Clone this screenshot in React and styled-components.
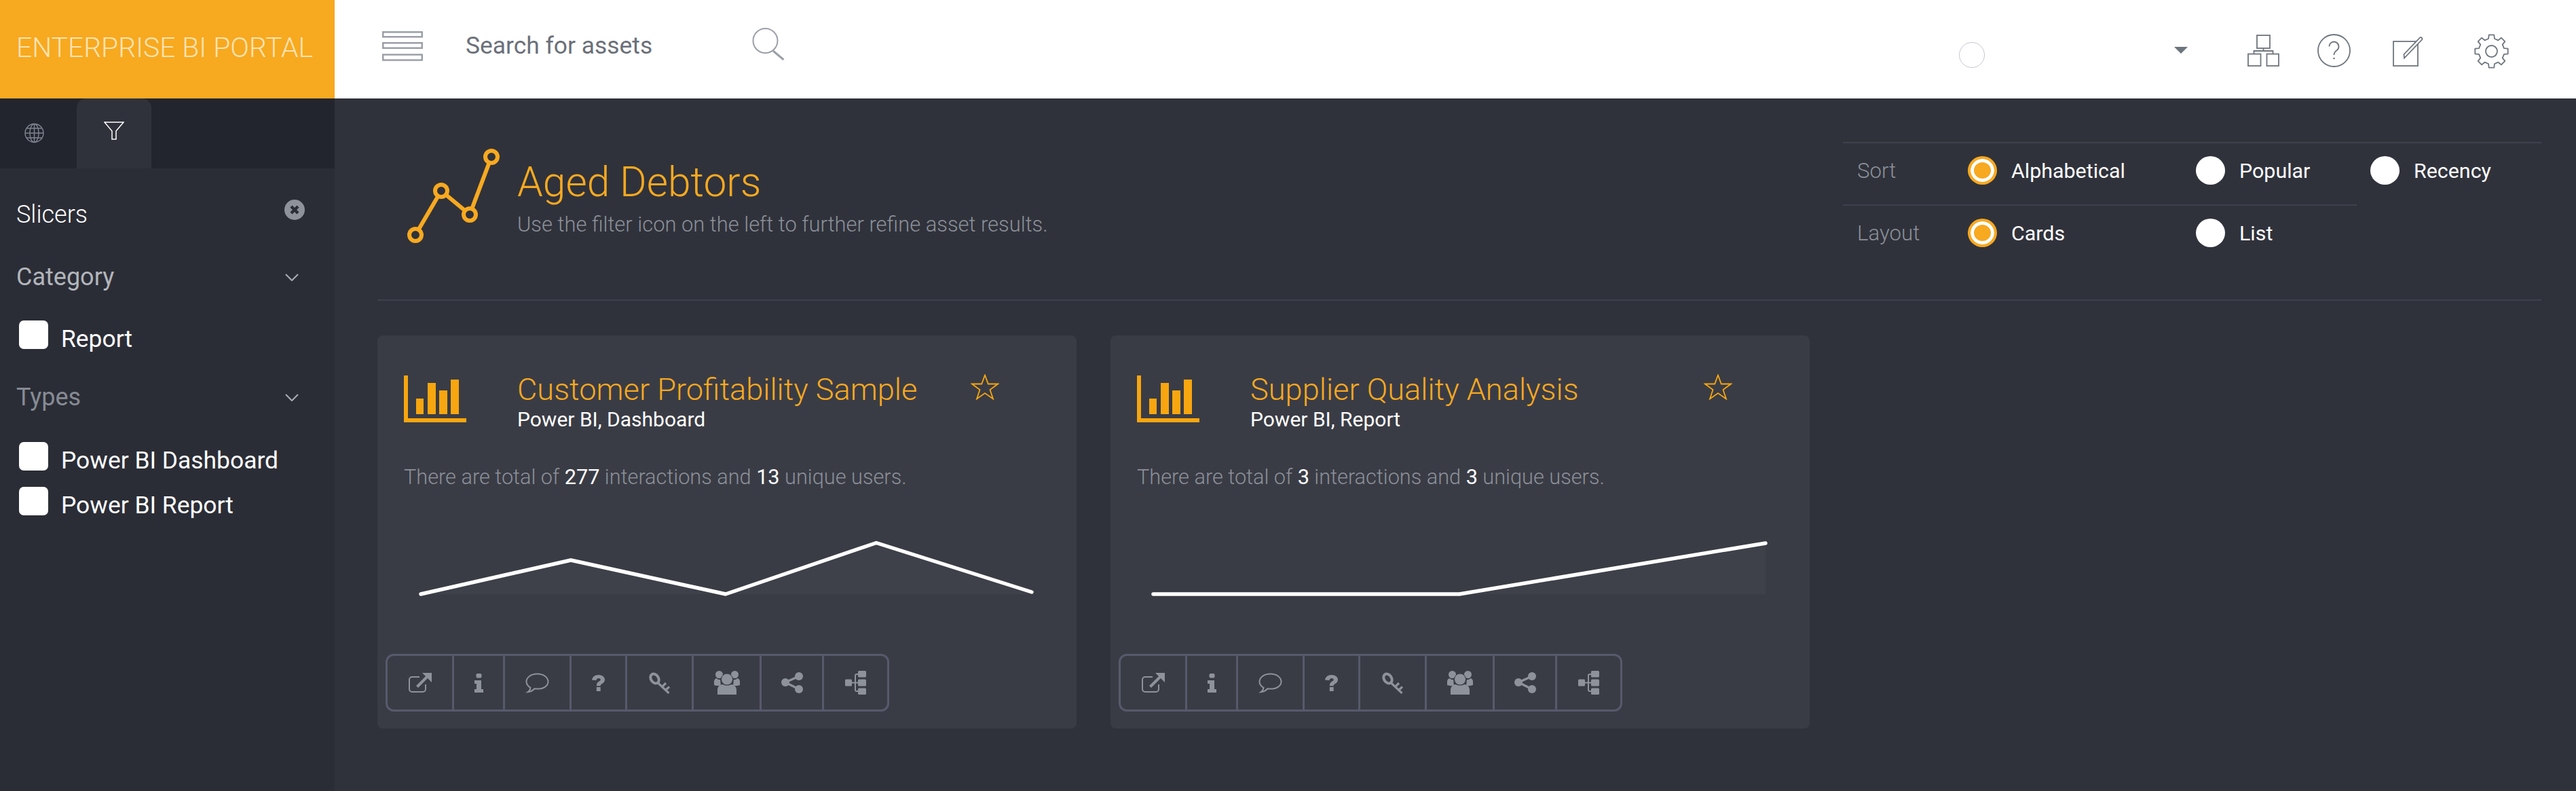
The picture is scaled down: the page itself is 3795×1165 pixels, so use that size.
import React from "react";
import styled, { createGlobalStyle } from "styled-components";

const GlobalStyle = createGlobalStyle`
  html, body {
    margin: 0;
    padding: 0;
    background: #30323b;
    font-family: Roboto, "Liberation Sans", sans-serif;
  }
  * {
    box-sizing: border-box;
  }
`;

const Page = styled.div`
  width: 3795px;
  height: 1165px;
  display: flex;
  flex-direction: column;
  overflow: hidden;
`;

const TopBar = styled.header`
  height: 145px;
  display: flex;
  align-items: flex-start;
  background: #fff;
  flex: none;
`;

const Brand = styled.div`
  width: 493px;
  height: 145px;
  flex: none;
  background: #f7a920;
  color: #fce3b4;
  font-size: 40.8px;
  font-weight: 300;
  line-height: 141px;
  padding-left: 24px;
  white-space: nowrap;
`;

const MenuIcon = styled.svg`
  width: 60px;
  height: 44px;
  margin: 46px 0 0 70px;
  flex: none;
`;

const SearchBox = styled.div`
  width: 422px;
  margin: 46px 0 0 63px;
  flex: none;
  color: #6b7079;
  font-size: 35.4px;
  line-height: 42px;
`;

const SearchIcon = styled.svg`
  width: 48px;
  height: 48px;
  margin-top: 41px;
  flex: none;
`;

const UserArea = styled.div`
  margin-left: auto;
  padding-right: 99px;
  display: flex;
  align-items: flex-start;
`;

const Avatar = styled.div`
  width: 38px;
  height: 38px;
  margin-top: 62px;
  border: 1px solid #c6c6d6;
  border-radius: 50%;
`;

const Caret = styled.div`
  width: 0;
  height: 0;
  margin: 69px 0 0 279px;
  border-left: 10px solid transparent;
  border-right: 10px solid transparent;
  border-top: 10px solid #6c757d;
`;

const TopIcon = styled.svg`
  width: ${(p) => p.$w}px;
  height: ${(p) => p.$h}px;
  margin-left: ${(p) => p.$gap}px;
  margin-top: ${(p) => p.$top}px;
  flex: none;
  fill: none;
  stroke: #6e767e;
  stroke-width: 1.8;
`;

const Body = styled.div`
  flex: 1;
  display: flex;
  min-height: 0;
`;

const Sidebar = styled.aside`
  width: 493px;
  flex: none;
  background: #2b2d36;
  display: flex;
  flex-direction: column;
`;

const TabStrip = styled.div`
  height: 103px;
  display: flex;
  background: #23252e;
`;

const Tab = styled.div`
  width: ${(p) => (p.$active ? 110 : 113)}px;
  height: 103px;
  display: flex;
  justify-content: ${(p) => (p.$active ? "center" : "flex-start")};
  padding-top: ${(p) => (p.$active ? 34 : 36)}px;
  padding-left: ${(p) => (p.$active ? 0 : 36)}px;
  background: ${(p) => (p.$active ? "#30323b" : "transparent")};
  border-radius: 14px 14px 0 0;
`;

const SlicerPanel = styled.div`
  padding: 38px 44px 0 24px;
`;

const SlicerRow = styled.div`
  height: 60px;
  display: flex;
  align-items: center;
  justify-content: space-between;
  margin-top: ${(p) => p.$mt || 0}px;
  color: ${(p) => p.$color};
  font-size: ${(p) => p.$size}px;
  font-weight: ${(p) => p.$weight};
`;

const CloseIcon = styled.svg`
  width: 30px;
  height: 30px;
  margin-top: -15px;
`;

const Chevron = styled.svg`
  width: 20px;
  height: 11px;
  margin-right: 9px;
  fill: none;
  stroke: #a5a9b0;
  stroke-width: 2.2;
`;

const CheckRow = styled.label`
  display: flex;
  align-items: flex-start;
  height: 42px;
  margin-top: ${(p) => p.$mt}px;
  margin-left: 4px;
  color: #fff;
  font-size: 35.4px;
  line-height: 54px;
  white-space: nowrap;
`;

const CheckBox = styled.span`
  width: 43px;
  height: 42px;
  flex: none;
  background: #fff;
  border-radius: 7px;
  margin-right: 19px;
`;

const Main = styled.main`
  flex: 1;
  padding: 0 51px 0 63px;
  background: #30323b;
  min-width: 0;
`;

const PageHead = styled.section`
  height: 298px;
  display: flex;
  justify-content: space-between;
  border-bottom: 2px solid #3e404d;
`;

const HeadLeft = styled.div`
  display: flex;
  padding: 73px 0 0 44px;
`;

const HeadIcon = styled.svg`
  width: 137px;
  height: 141px;
  flex: none;
  fill: none;
  stroke: #f7a920;
  stroke-width: 6;
`;

const HeadText = styled.div`
  margin-left: 25px;
`;

const PageTitle = styled.h1`
  margin: 17px 0 0;
  color: #f7a920;
  font-size: 60.5px;
  font-weight: 300;
  line-height: 68px;
`;

const PageHint = styled.p`
  margin: 8px 0 0;
  color: #8b9099;
  font-size: 30.9px;
  font-weight: 300;
  line-height: 40px;
`;

const OptionsPanel = styled.div`
  width: 1029px;
  margin-top: 64px;
`;

const OptionRow = styled.div`
  width: ${(p) => p.$width}px;
  height: 92px;
  padding-top: 19px;
  border-top: 2px solid #3e404d;
  display: flex;
  align-items: flex-start;
`;

const OptionLabel = styled.div`
  width: 184px;
  padding-left: 21px;
  color: #8b9099;
  font-size: 31.2px;
  font-weight: 300;
  line-height: 44px;
`;

const Option = styled.div`
  width: ${(p) => p.$width}px;
  display: flex;
  align-items: flex-start;
  color: #fff;
  font-size: 30.4px;
  line-height: 44px;
  white-space: nowrap;
`;

const Radio = styled.span`
  width: 43px;
  height: 42px;
  margin-right: 21px;
  flex: none;
  border-radius: 50%;
  background: ${(p) => (p.$on ? "#f7a920" : "#fff")};
  border: ${(p) => (p.$on ? "4px solid #f7a920" : "none")};
  box-shadow: ${(p) => (p.$on ? "inset 0 0 0 5px #fff" : "none")};
`;

const CardList = styled.div`
  display: flex;
  gap: 50px;
  margin-top: 51px;
`;

const Card = styled.article`
  width: 1030px;
  height: 579px;
  background: #3a3c45;
  border-radius: 8px;
  padding-top: 55px;
`;

const CardHead = styled.div`
  display: flex;
  padding-left: 39px;
`;

const CardIcon = styled.svg`
  width: 92px;
  height: 69px;
  margin: 4px 75px 0 0;
  flex: none;
  fill: #f7a60f;
`;

const CardTitles = styled.div`
  width: 668px;
  flex: none;
`;

const CardTitle = styled.h2`
  margin: 0;
  color: #f7a920;
  font-size: 45.2px;
  font-weight: 300;
  line-height: 49px;
  white-space: nowrap;
`;

const CardType = styled.div`
  color: #fff;
  font-size: 30px;
  line-height: 40px;
`;

const Star = styled.svg`
  width: 42px;
  height: 38px;
  margin-top: 2px;
  flex: none;
  fill: none;
  stroke: #f7a60f;
  stroke-width: 1.8;
`;

const Stats = styled.p`
  margin: 45px 0 0;
  padding-left: 39px;
  color: #8b9099;
  font-size: 30.7px;
  font-weight: 300;
  line-height: 40px;

  b {
    color: #fff;
    font-weight: 400;
  }
`;

const Spark = styled.svg`
  display: block;
  width: 1030px;
  height: 160px;
  margin-top: 57px;
`;

const ActionBar = styled.div`
  display: flex;
  width: 742px;
  height: 85px;
  margin: 23px 0 0 12px;
  border: 3px solid #575a6c;
  border-radius: 12px;
`;

const ActionCell = styled.div`
  width: ${(p) => p.$width}px;
  flex: none;
  display: flex;
  align-items: center;
  justify-content: center;
  color: #8d929b;

  & + & {
    border-left: 3px solid #575a6c;
  }
`;

const ActionIcon = styled.svg`
  width: ${(p) => p.$w}px;
  height: ${(p) => p.$h}px;
  display: block;
  fill: currentColor;
`;

function gearPath(cx, cy, teeth, outer, root) {
  const pts = [];
  const step = (Math.PI * 2) / teeth;
  for (let i = 0; i < teeth; i++) {
    const a = i * step - Math.PI / 2;
    const d = step * 0.2;
    const d2 = step * 0.3;
    pts.push([a - d2, root], [a - d, outer], [a + d, outer], [a + d2, root]);
  }
  return (
    pts
      .map(([a, r], i) => `${i ? "L" : "M"}${(cx + Math.cos(a) * r).toFixed(2)} ${(cy + Math.sin(a) * r).toFixed(2)}`)
      .join(" ") + "Z"
  );
}

const actions = [
  {
    width: 95,
    w: 35,
    h: 30,
    shape: (
      <>
        <path d="M17 6H6a4 4 0 0 0-4 4v14a4 4 0 0 0 4 4h16a4 4 0 0 0 4-4v-7" fill="none" stroke="currentColor" strokeWidth="2" />
        <path d="M13.5 20.5 28 6" fill="none" stroke="currentColor" strokeWidth="4" />
        <path d="M21 0h14v14z" />
      </>
    ),
  },
  {
    width: 75,
    w: 13,
    h: 28,
    shape: (
      <>
        <rect x="2.5" y="0" width="8" height="6.5" rx="2" />
        <path d="M0 10h10v13h3v5H0v-5h3v-8H0z" />
      </>
    ),
  },
  {
    width: 98,
    w: 35,
    h: 30,
    shape: (
      <path
        d="M17.5 1.5C8 1.5 1.5 7 1.5 13c0 3.6 2.4 6.8 6 8.8-.4 2.6-1.800 5-4 6.500 3.800-.3 7.400-2.200 10-5 1.300.2 2.600.3 4 .3 9.500 0 16-4.600 16-10.600S27 1.500 17.500 1.500z"
        fill="none"
        stroke="currentColor"
        strokeWidth="2"
      />
    ),
  },
  {
    width: 82,
    w: 19,
    h: 24,
    shape: (
      <>
        <path d="M0 7.500C.6 3 4.300 0 9.700 0 15 0 19 3 19 7c0 3-1.800 4.700-4 6-1.500.9-2.300 1.600-2.300 3.300H6.800c0-3.200 1-4.800 3-6.200 1.500-1 3-1.600 3-3 0-1.200-1.200-2-2.900-2-1.900 0-3.200 1-3.600 3z" />
        <rect x="6.800" y="18" width="5.900" height="6" />
      </>
    ),
  },
  {
    width: 98,
    w: 33,
    h: 32,
    shape: (
      <>
        <ellipse cx="9.500" cy="9.500" rx="5.500" ry="7.500" transform="rotate(-35 9.500 9.500)" fill="none" stroke="currentColor" strokeWidth="4" />
        <path d="M13.500 15 30.500 31M20.500 21.500l5.500-5.500M25.500 26.500l5.500-5" fill="none" stroke="currentColor" strokeWidth="3.200" />
      </>
    ),
  },
  {
    width: 100,
    w: 38,
    h: 35,
    shape: (
      <>
        <circle cx="7.500" cy="5.500" r="5.500" />
        <circle cx="30.500" cy="5.500" r="5.500" />
        <path d="M0 21v-5c0-3 1.500-4.500 4-5 1.500 2 3 2 5 2l1 9H4z" />
        <path d="M38 21v-5c0-3-1.500-4.500-4-5-1.500 2-3 2-5 2l-1 9h6z" />
        <circle cx="19" cy="12.500" r="8.500" stroke="#3a3c45" strokeWidth="1" />
        <path d="M5 35v-7c0-5 4-8 8-8 3 2 9 2 12 0 4 0 8 3 8 8v7z" />
      </>
    ),
  },
  {
    width: 92,
    w: 32,
    h: 31,
    shape: (
      <>
        <circle cx="6" cy="15" r="6" />
        <circle cx="26" cy="6" r="6" />
        <circle cx="26" cy="25" r="6" />
        <path d="M6 15 26 6M6 15l20 10" fill="none" stroke="currentColor" strokeWidth="3.500" />
      </>
    ),
  },
  {
    width: 96,
    w: 31,
    h: 35,
    shape: (
      <>
        <rect x="0" y="12.500" width="10" height="10" rx="1.500" />
        <rect x="19" y="0" width="12" height="9.500" rx="1.500" />
        <rect x="19" y="12.500" width="12" height="10" rx="1.500" />
        <rect x="19" y="25.500" width="12" height="9.500" rx="1.500" />
        <path d="M9 17.500h10M20 5h-3a2 2 0 0 0-2 2v21a2 2 0 0 0 2 2h3" fill="none" stroke="currentColor" strokeWidth="2" />
      </>
    ),
  },
];

const cards = [
  {
    title: "Customer Profitability Sample",
    type: "Power BI, Dashboard",
    hits: "277",
    users: "13",
    line: "64,95 285,45 513,95 735,19.500 964,92",
    area: "64,95 285,45 513,95 735,19.500 964,92 964,95",
  },
  {
    title: "Supplier Quality Analysis",
    type: "Power BI, Report",
    hits: "3",
    users: "3",
    line: "63,95 289,95 514,95 965,20",
    area: "63,95 514,95 965,20 965,95",
  },
];

function AssetCard({ card }) {
  return (
    <Card>
      <CardHead>
        <CardIcon viewBox="0 0 92 69">
          <rect x="0" y="0" width="6" height="69" />
          <rect x="0" y="63" width="92" height="6" />
          <rect x="18" y="34" width="11" height="23" />
          <rect x="35" y="11" width="12" height="46" />
          <rect x="52" y="22" width="12" height="35" />
          <rect x="69" y="6" width="12" height="51" />
        </CardIcon>
        <CardTitles>
          <CardTitle>{card.title}</CardTitle>
          <CardType>{card.type}</CardType>
        </CardTitles>
        <Star viewBox="0 0 42 38">
          <path d="M21 1.500 25.800 14.500H40L28.500 23 33 36.500 21 28 9 36.500 13.500 23 2 14.500H16.200z" />
        </Star>
      </CardHead>
      <Stats>
        There are total of <b>{card.hits}</b> interactions and <b>{card.users}</b> unique users.
      </Stats>
      <Spark viewBox="0 0 1030 160">
        <polygon points={card.area} fill="#3e404a" />
        <polyline points={card.line} fill="none" stroke="#fff" strokeWidth="5.500" strokeLinecap="round" strokeLinejoin="round" />
      </Spark>
      <ActionBar>
        {actions.map((a, i) => (
          <ActionCell key={i} $width={a.width}>
            <ActionIcon $w={a.w} $h={a.h} viewBox={`0 0 ${a.w} ${a.h}`}>
              {a.shape}
            </ActionIcon>
          </ActionCell>
        ))}
      </ActionBar>
    </Card>
  );
}

function App() {
  return (
    <Page>
      <GlobalStyle />
      <TopBar>
        <Brand>ENTERPRISE BI PORTAL</Brand>
        <MenuIcon viewBox="0 0 60 44" fill="none" stroke="#9aa0a8" strokeWidth="2.500">
          <rect x="1.250" y="1.250" width="57.500" height="7" />
          <rect x="1.250" y="17.250" width="57.500" height="7.500" />
          <rect x="1.250" y="34.500" width="57.500" height="8" />
        </MenuIcon>
        <SearchBox>Search for assets</SearchBox>
        <SearchIcon viewBox="0 0 48 48" fill="none" stroke="#9aa0a8">
          <circle cx="19.500" cy="19" r="18" strokeWidth="2" />
          <path d="M31 34 46.500 47" strokeWidth="3" />
        </SearchIcon>
        <UserArea>
          <Avatar />
          <Caret />
          <TopIcon $w={47} $h={47} $gap={88} $top={51} viewBox="0 0 47 47">
            <rect x="14" y="1" width="19" height="19" />
            <rect x="1" y="28.500" width="18.500" height="17.500" />
            <rect x="28.500" y="28.500" width="17.500" height="17.500" />
            <path d="M23.500 20v4M9.500 28.500V24h28v4.500" />
          </TopIcon>
          <TopIcon $w={49} $h={49} $gap={56} $top={50} viewBox="0 0 49 49">
            <circle cx="24.500" cy="24.500" r="23.500" />
            <path d="M17.500 18.500a7 7 0 1 1 11 5.800c-2.600 1.800-4 3.200-4 6.700" />
            <circle cx="24.500" cy="36" r="1.300" fill="#6e767e" stroke="none" />
          </TopIcon>
          <TopIcon $w={47} $h={47} $gap={61} $top={52} viewBox="0 0 47 47">
            <rect x="2" y="9" width="36" height="36" />
            <path d="M18 33.500 17.500 28 41 3.500c1.500-1.500 4.500 1 3 3L21 30.500z" fill="#fff" />
          </TopIcon>
          <TopIcon $w={51} $h={51} $gap={74} $top={50} viewBox="0 0 51 51">
            <path d={gearPath(25.5, 25.5, 8, 24.5, 19)} strokeLinejoin="round" />
            <circle cx="25.500" cy="25.500" r="8.500" />
          </TopIcon>
        </UserArea>
      </TopBar>
      <Body>
        <Sidebar>
          <TabStrip>
            <Tab>
              <svg width="29" height="30" viewBox="0 0 29 30" fill="none" stroke="#7f858f" strokeWidth="1.400">
                <circle cx="14.500" cy="15" r="13.500" />
                <ellipse cx="14.500" cy="15" rx="6.500" ry="13.500" />
                <path d="M14.500 1.500v27M1 15h27M3 8h23M3 22h23" />
              </svg>
            </Tab>
            <Tab $active>
              <svg width="30" height="27" viewBox="0 0 30 27" fill="none" stroke="#fff" strokeWidth="1.500">
                <path d="M1 1h28L18 14v12h-6V14z" />
              </svg>
            </Tab>
          </TabStrip>
          <SlicerPanel>
            <SlicerRow $color="#fff" $size={36} $weight={300}>
              Slicers
              <CloseIcon viewBox="0 0 30 30">
                <circle cx="15" cy="15" r="15" fill="#8d929b" />
                <path d="M10 10l10 10M20 10 10 20" stroke="#2b2d36" strokeWidth="4.500" />
              </CloseIcon>
            </SlicerRow>
            <SlicerRow $mt={32} $color="#b2b5bb" $size={36} $weight={400}>
              Category
              <Chevron viewBox="0 0 20 11">
                <path d="M1 1l9 9 9-9" />
              </Chevron>
            </SlicerRow>
            <CheckRow $mt={34}>
              <CheckBox />
              Report
            </CheckRow>
            <SlicerRow $mt={41} $color="#868b94" $size={36} $weight={400}>
              Types
              <Chevron viewBox="0 0 20 11">
                <path d="M1 1l9 9 9-9" />
              </Chevron>
            </SlicerRow>
            <CheckRow $mt={36}>
              <CheckBox />
              Power BI Dashboard
            </CheckRow>
            <CheckRow $mt={24}>
              <CheckBox />
              Power BI Report
            </CheckRow>
          </SlicerPanel>
        </Sidebar>
        <Main>
          <PageHead>
            <HeadLeft>
              <HeadIcon viewBox="0 0 137 141">
                <polyline points="12,128 50,63 92,98 124,13" />
                <circle cx="12" cy="128" r="9" fill="#30323b" />
                <circle cx="50" cy="63" r="9" fill="#30323b" />
                <circle cx="92" cy="98" r="9" fill="#30323b" />
                <circle cx="124" cy="13" r="9" fill="#30323b" />
              </HeadIcon>
              <HeadText>
                <PageTitle>Aged Debtors</PageTitle>
                <PageHint>Use the filter icon on the left to further refine asset results.</PageHint>
              </HeadText>
            </HeadLeft>
            <OptionsPanel>
              <OptionRow $width={1029}>
                <OptionLabel>Sort</OptionLabel>
                <Option $width={336}>
                  <Radio $on />
                  Alphabetical
                </Option>
                <Option $width={257}>
                  <Radio />
                  Popular
                </Option>
                <Option $width={200}>
                  <Radio />
                  Recency
                </Option>
              </OptionRow>
              <OptionRow $width={757}>
                <OptionLabel>Layout</OptionLabel>
                <Option $width={336}>
                  <Radio $on />
                  Cards
                </Option>
                <Option $width={200}>
                  <Radio />
                  List
                </Option>
              </OptionRow>
            </OptionsPanel>
          </PageHead>
          <CardList>
            {cards.map((c) => (
              <AssetCard key={c.title} card={c} />
            ))}
          </CardList>
        </Main>
      </Body>
    </Page>
  );
}

export default App;
